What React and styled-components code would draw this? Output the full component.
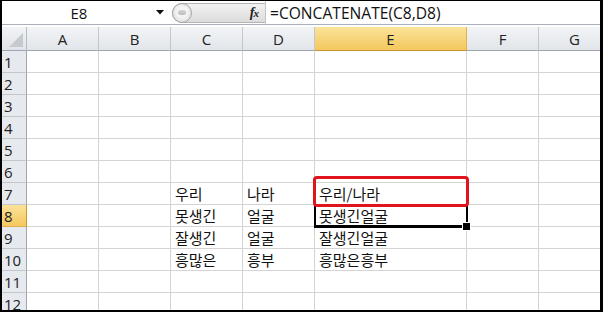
import React from "react";
import styled, { createGlobalStyle } from "styled-components";

const Global = createGlobalStyle`
  html, body { margin: 0; padding: 0; background: #fff; }
  body { width: 603px; height: 312px; overflow: hidden; }
`;

const COLS = [
  { id: "A", w: 72 },
  { id: "B", w: 72 },
  { id: "C", w: 72 },
  { id: "D", w: 72 },
  { id: "E", w: 152 },
  { id: "F", w: 72 },
  { id: "G", w: 72 },
];
const ROWH = 22;
const HEADW = 25;
const HEADH = 24;

const data = {
  7: { C: "우리", D: "나라", E: "우리/나라" },
  8: { C: "못생긴", D: "얼굴", E: "못생긴얼굴" },
  9: { C: "잘생긴", D: "얼굴", E: "잘생긴얼굴" },
  10: { C: "흥많은", D: "흥부", E: "흥많은흥부" },
};

const Frame = styled.div`
  box-sizing: border-box;
  width: 603px;
  height: 312px;
  border-style: solid;
  border-color: #000;
  border-width: 1px 3px 2px 2px;
  overflow: hidden;
  display: flex;
  flex-direction: column;
  background: #fff;
  font-family: "Open Sans", "Noto Sans", sans-serif;
`;

const FormulaBar = styled.div`
  display: flex;
  align-items: stretch;
  height: 23px;
  flex: none;
  border-bottom: 1px solid #a9b2bc;
  background: #fff;
`;

const NameBox = styled.div`
  width: 154px;
  display: flex;
  align-items: center;
  justify-content: center;
  font-size: 15px;
  color: #111;
`;

const Drop = styled.div`
  width: 16px;
  display: flex;
  align-items: center;
  justify-content: flex-start;
`;

const Pill = styled.div`
  position: relative;
  width: 93px;
  margin: 2px 0 1px;
  border: 1px solid #b4b4b4;
  border-right: none;
  border-radius: 11px 0 0 11px;
  background: linear-gradient(#f2f2f2, #dcdcdc);
  display: flex;
  align-items: center;
  justify-content: flex-end;
  padding-right: 7px;
  box-sizing: border-box;
`;

const PillKnob = styled.div`
  position: absolute;
  left: -1px;
  top: -1px;
  width: 20px;
  height: 20px;
  border-radius: 50%;
  border: 1px solid #a6a6a6;
  background: radial-gradient(circle at 50% 45%, #f4f4f4 0 40%, #e2e2e2 70%);
  box-sizing: border-box;
  &::after {
    content: "";
    position: absolute;
    left: 5px;
    top: 6px;
    width: 8px;
    height: 5px;
    border-radius: 3px;
    background: linear-gradient(#d4d4d4, #bdbdbd);
  }
`;

const Fx = styled.span`
  font-family: "Liberation Serif", serif;
  font-style: italic;
  font-weight: bold;
  font-size: 14px;
  color: #222;
  letter-spacing: -1px;
  & small { font-size: 11px; }
`;

const FormulaInput = styled.div`
  flex: 1;
  border-left: 1px solid #c4c4c4;
  display: flex;
  align-items: center;
  padding-left: 4px;
  font-size: 15.6px;
  color: #111;
  white-space: nowrap;
`;

const Spacer = styled.div`
  height: 2px;
  flex: none;
  background: #fff;
`;

const Sheet = styled.div`
  position: relative;
  display: grid;
  grid-template-columns: ${HEADW}px ${COLS.map((c) => c.w + "px").join(" ")};
  grid-template-rows: ${HEADH}px repeat(12, ${ROWH}px);
`;

const Corner = styled.div`
  position: relative;
  box-sizing: border-box;
  background: linear-gradient(#f1f3f6, #e1e4e8);
  border-right: 1px solid #b7bcc3;
  border-bottom: 1px solid #9ea6b0;
  &::after {
    content: "";
    position: absolute;
    right: 3px;
    bottom: 3px;
    width: 0;
    height: 0;
    border-left: 14px solid transparent;
    border-bottom: 14px solid #c6c9cd;
  }
`;

const ColHead = styled.div`
  box-sizing: border-box;
  display: flex;
  align-items: center;
  justify-content: center;
  font-size: 15px;
  color: #222;
  background: ${(p) =>
    p.$active
      ? "linear-gradient(#fbe39a, #f4c85d)"
      : "linear-gradient(#f2f4f7, #e2e5e9)"};
  border-right: 1px solid ${(p) => (p.$active ? "#e0b24a" : "#c3c7cd")};
  border-bottom: 1px solid ${(p) => (p.$active ? "#c9962e" : "#9ea6b0")};
`;

const RowHead = styled.div`
  box-sizing: border-box;
  display: flex;
  align-items: center;
  justify-content: flex-start;
  padding-left: 2px;
  font-size: 15px;
  color: #222;
  background: ${(p) =>
    p.$active ? "linear-gradient(#fbe39a, #f4c85d)" : "#e6e9ee"};
  border-right: 1px solid ${(p) => (p.$active ? "#c9962e" : "#9ea6b0")};
  border-bottom: 1px solid ${(p) => (p.$active ? "#e0b24a" : "#c3c7cd")};
`;

const Cell = styled.div`
  box-sizing: border-box;
  border-right: 1px solid #d4d4d4;
  border-bottom: 1px solid #d4d4d4;
  display: flex;
  align-items: flex-end;
  padding: 0 0 1px 4px;
  font-family: "Noto Sans CJK KR", "Noto Sans", sans-serif;
  font-size: 15px;
  line-height: 19px;
  color: #111;
  white-space: nowrap;
  overflow: hidden;
`;

const Selection = styled.div`
  position: absolute;
  box-sizing: border-box;
  border: 2px solid #000;
  border-bottom-width: 3px;
  pointer-events: none;
`;

const Handle = styled.div`
  position: absolute;
  right: -5px;
  bottom: -6px;
  width: 7px;
  height: 7px;
  background: #000;
  border: 1px solid #fff;
`;

const Annotation = styled.div`
  position: absolute;
  box-sizing: border-box;
  border: 3px solid #e0141c;
  border-radius: 4px;
  pointer-events: none;
`;

function colLeft(idx) {
  let x = HEADW;
  for (let i = 0; i < idx; i++) x += COLS[i].w;
  return x;
}

export default function App() {
  const eIdx = 4;
  const selLeft = colLeft(eIdx) - 1;
  const selTop = HEADH + 7 * ROWH - 1;
  return (
    <>
      <Global />
      <Frame>
        <FormulaBar>
          <NameBox>E8</NameBox>
          <Drop>
            <svg width="8" height="5" viewBox="0 0 8 5">
              <path d="M0 0 L8 0 L4 4.5 Z" fill="#111" />
            </svg>
          </Drop>
          <Pill>
            <PillKnob />
            <Fx>
              f<small>x</small>
            </Fx>
          </Pill>
          <FormulaInput>=CONCATENATE(C8,D8)</FormulaInput>
        </FormulaBar>
        <Spacer />
        <Sheet>
          <Corner />
          {COLS.map((c) => (
            <ColHead key={c.id} $active={c.id === "E"}>
              {c.id}
            </ColHead>
          ))}
          {Array.from({ length: 12 }, (_, i) => i + 1).map((r) => (
            <React.Fragment key={r}>
              <RowHead $active={r === 8}>{r}</RowHead>
              {COLS.map((c) => (
                <Cell key={c.id}>{(data[r] && data[r][c.id]) || ""}</Cell>
              ))}
            </React.Fragment>
          ))}
          <Selection
            style={{ left: selLeft, top: selTop, width: COLS[eIdx].w + 2, height: ROWH + 2 }}
          >
            <Handle />
          </Selection>
          <Annotation
            style={{ left: selLeft - 1, top: HEADH + 6 * ROWH - 7, width: COLS[eIdx].w + 4, height: ROWH + 9 }}
          />
        </Sheet>
      </Frame>
    </>
  );
}
